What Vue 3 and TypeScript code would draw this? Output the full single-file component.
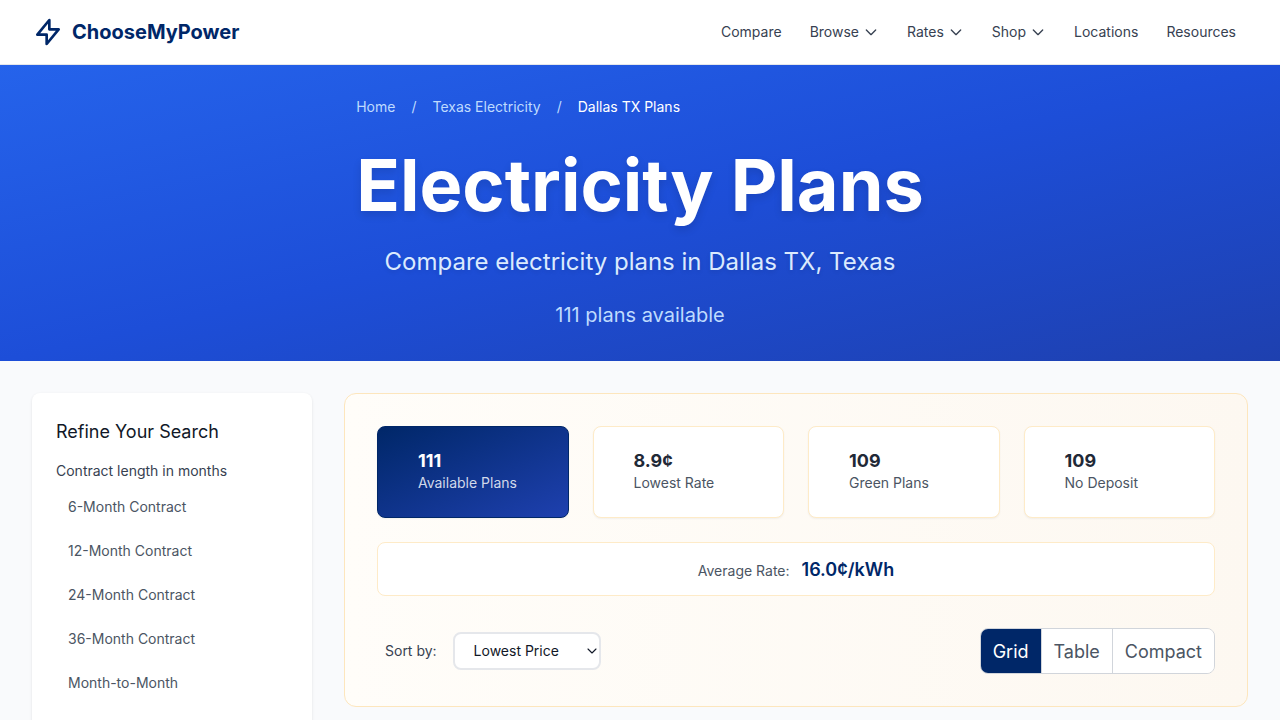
<script setup lang="ts">
import { ref } from 'vue'

interface NavItem { label: string; menu?: boolean }
interface Stat { value: string; label: string }

const nav: NavItem[] = [
  { label: 'Compare' },
  { label: 'Browse', menu: true },
  { label: 'Rates', menu: true },
  { label: 'Shop', menu: true },
  { label: 'Locations' },
  { label: 'Resources' },
]
const stats: Stat[] = [
  { value: '111', label: 'Available Plans' },
  { value: '8.9¢', label: 'Lowest Rate' },
  { value: '109', label: 'Green Plans' },
  { value: '109', label: 'No Deposit' },
]
const contracts: string[] = ['6-Month Contract', '12-Month Contract', '24-Month Contract', '36-Month Contract', 'Month-to-Month']
const views: string[] = ['Grid', 'Table', 'Compact']
const activeView = ref('Grid')
const sort = ref('price')
</script>

<template>
  <div class="page">
    <header class="header">
      <a class="brand">
        <svg class="bolt" viewBox="0 0 24 24" fill="none" stroke="currentColor" stroke-width="2" stroke-linecap="round" stroke-linejoin="round"><path d="M13 10V3L4 14h7v7l9-11h-7z" /></svg>
        <span>ChooseMyPower</span>
      </a>
      <nav class="nav">
        <a v-for="item in nav" :key="item.label" class="nav-item">
          {{ item.label }}
          <svg v-if="item.menu" class="chevron" viewBox="0 0 24 24" fill="none" stroke="currentColor" stroke-width="2" stroke-linecap="round" stroke-linejoin="round"><path d="M19 9l-7 7-7-7" /></svg>
        </a>
      </nav>
    </header>

    <section class="hero">
      <div class="hero-inner">
        <div class="crumbs">
          <a>Home</a><span>/</span><a>Texas Electricity</a><span>/</span><span class="current">Dallas TX Plans</span>
        </div>
        <h1>Electricity Plans</h1>
        <p class="subtitle">Compare electricity plans in Dallas TX, Texas</p>
        <p class="count">111 plans available</p>
      </div>
    </section>

    <main class="main">
      <aside class="sidebar">
        <h2>Refine Your Search</h2>
        <h3>Contract length in months</h3>
        <a v-for="c in contracts" :key="c" class="filter">{{ c }}</a>
      </aside>

      <section class="panel">
        <div class="stats">
          <div v-for="(s, i) in stats" :key="s.label" class="stat" :class="{ primary: i === 0 }">
            <div class="stat-value">{{ s.value }}</div>
            <div class="stat-label">{{ s.label }}</div>
          </div>
        </div>
        <div class="average">
          <span class="average-label">Average Rate:</span>
          <span class="average-value">16.0¢/kWh</span>
        </div>
        <div class="controls">
          <div class="sort">
            <label for="sort">Sort by:</label>
            <div class="select-wrap">
              <select id="sort" v-model="sort">
                <option value="price">Lowest Price</option>
                <option value="rating">Highest Rated</option>
              </select>
              <svg class="select-arrow" viewBox="0 0 10 6" fill="none" stroke="currentColor" stroke-width="1.1" stroke-linecap="round" stroke-linejoin="round"><path d="M1 1l4 4 4-4" /></svg>
            </div>
          </div>
          <div class="views">
            <button v-for="v in views" :key="v" :class="{ active: v === activeView }" @click="activeView = v">{{ v }}</button>
          </div>
        </div>
      </section>
    </main>
  </div>
</template>

<style>
html, body { margin: 0; overflow: hidden; }
</style>

<style scoped>
* { box-sizing: border-box; margin: 0; }
.page {
  height: 720px;
  overflow: hidden;
  background: #f9fafc;
  font-family: Inter, "Liberation Sans", sans-serif;
  color: #111827;
}
.header {
  display: flex;
  justify-content: space-between;
  align-items: center;
  height: 65px;
  padding: 0 32px;
  background: #fff;
  border-bottom: 1px solid #e5e7eb;
}
.brand { display: flex; align-items: center; gap: 8px; color: #002768; font-size: 20px; line-height: 28px; font-weight: 700; }
.bolt { width: 32px; height: 32px; }
.nav { display: flex; gap: 4px; }
.nav-item { display: flex; align-items: center; gap: 4px; padding: 8px 12px; font-size: 14px; line-height: 20px; color: #374151; }
.chevron { width: 16px; height: 16px; }

.hero {
  display: flex;
  justify-content: center;
  height: 296px;
  padding-top: 32px;
  background: linear-gradient(to bottom right, #2563eb, #1d4ed8, #1e40af);
  color: #fff;
}
.hero-inner { text-align: center; }
.crumbs { display: flex; gap: 16px; font-size: 14px; line-height: 20px; color: #bfdbfe; margin-bottom: 32px; }
.current { color: #fff; }
h1 { font-size: 72px; line-height: 72px; font-weight: 700; text-shadow: 0 4px 8px rgba(0, 0, 0, 0.12); }
.subtitle { margin-top: 25px; font-size: 24px; line-height: 32px; color: #dbeafe; text-shadow: 0 2px 4px rgba(0, 0, 0, 0.1); }
.count { margin-top: 23px; font-size: 20px; line-height: 28px; color: #bfdbfe; }

.main { display: grid; grid-template-columns: 280px 1fr; gap: 32px; align-items: start; padding: 32px; }
.sidebar { height: 420px; padding: 25px 24px; background: #fff; border-radius: 8px; box-shadow: 0 1px 3px rgba(0, 0, 0, 0.1); }
.sidebar h2 { font-size: 18px; line-height: 28px; font-weight: 400; }
.sidebar h3 { margin: 15px 0 4px; font-size: 14px; line-height: 20px; font-weight: 400; color: #374151; }
.filter { display: block; padding: 12px; font-size: 14px; line-height: 20px; color: #4b5563; }

.panel {
  height: 314px;
  padding: 32px;
  border: 1px solid #fde6bd;
  border-radius: 12px;
  background: linear-gradient(to right, #fffdf9, #fdf8f1);
}
.stats { display: grid; grid-template-columns: repeat(4, 1fr); gap: 24px; }
.stat {
  height: 92px;
  padding: 20px 40px;
  background: #fff;
  border: 1px solid #feebc8;
  border-radius: 8px;
  box-shadow: 0 1px 2px rgba(0, 0, 0, 0.05);
}
.stat-value { font-size: 18px; line-height: 28px; font-weight: 700; color: #1f2937; }
.stat-label { font-size: 14px; line-height: 15px; color: #4b5563; }
.primary { background: linear-gradient(to bottom right, #002768, #1e40af); border-color: #002768; }
.primary .stat-value { color: #fff; }
.primary .stat-label { color: #d1d9ea; }
.average {
  display: flex;
  justify-content: center;
  align-items: baseline;
  gap: 12px;
  height: 54px;
  margin-top: 24px;
  padding-top: 13px;
  border: 1px solid #feebc8;
  border-radius: 8px;
  background: #fff;
}
.average-label { font-size: 14px; color: #4b5563; }
.average-value { font-size: 18px; line-height: 28px; font-weight: 600; color: #002768; }
.controls { display: flex; justify-content: space-between; align-items: center; margin-top: 32px; }
.sort { display: flex; align-items: center; gap: 16px; padding-left: 8px; font-size: 14px; color: #374151; }
.sort label { padding-bottom: 2px; }
.select-wrap { position: relative; display: flex; }
.select-arrow { position: absolute; right: 4px; top: 16px; width: 10px; height: 6px; color: #111827; pointer-events: none; }
select {
  appearance: none;
  height: 38px;
  width: 148px;
  padding: 8px 19px;
  border: 2px solid #e5e7eb;
  border-radius: 8px;
  background: #fff;
  color: #111827;
  font: inherit;
  line-height: 18px;
}
.views { display: flex; height: 46px; border: 1px solid #d1d5db; border-radius: 8px; overflow: hidden; }
.views button { padding: 2px 12px 0; border: 0; background: #fff; color: #4b5563; font: 18px/28px Inter, "Liberation Sans", sans-serif; }
.views button + button { border-left: 1px solid #d1d5db; }
.views .active { background: #002768; color: #fff; }
</style>
